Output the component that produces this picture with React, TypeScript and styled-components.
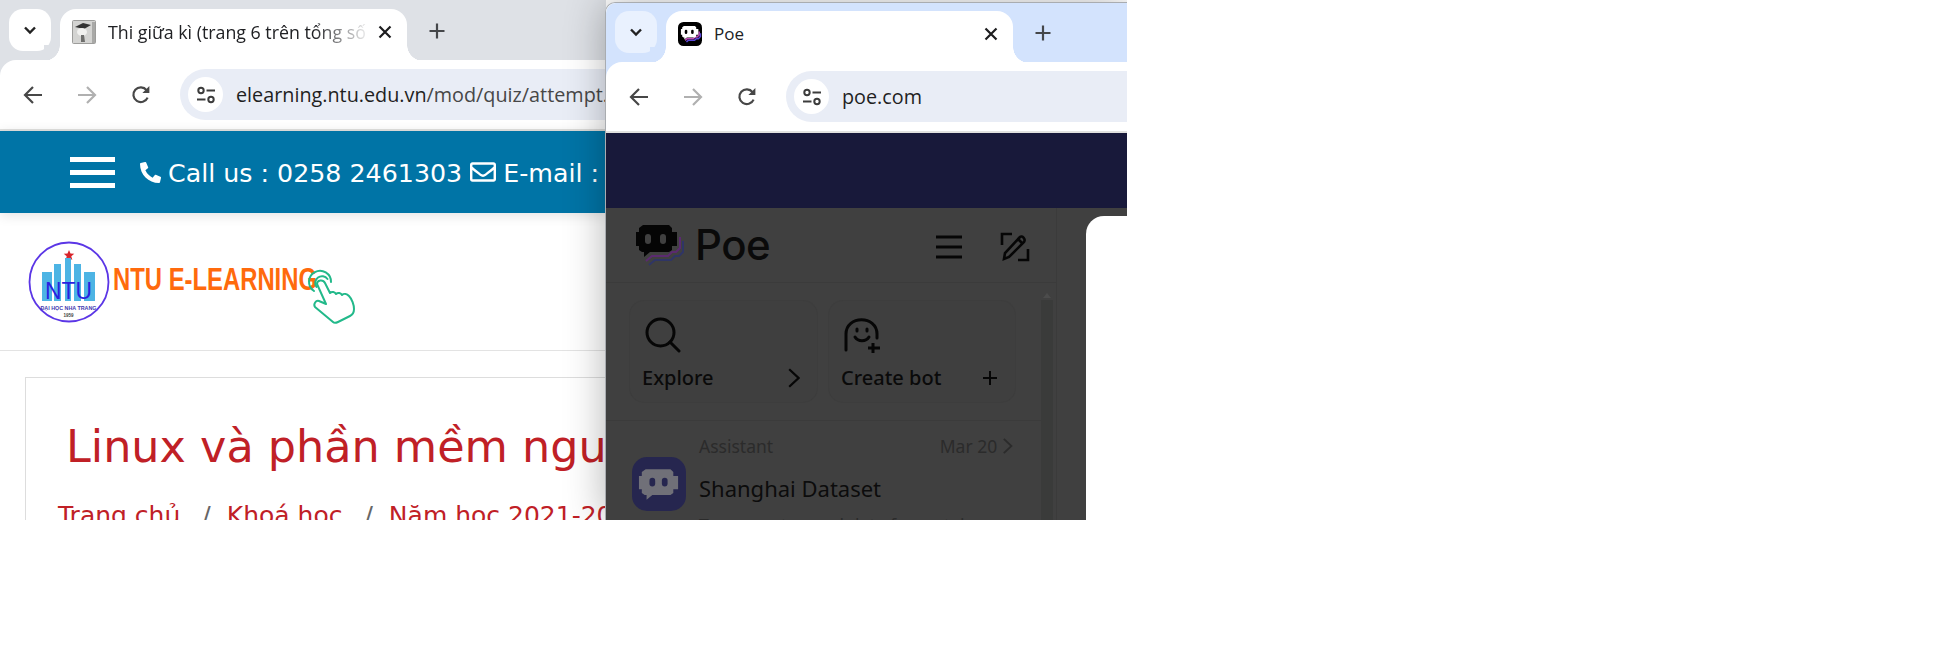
import React from 'react';
import styled, { createGlobalStyle } from 'styled-components';
import { FaPhoneAlt, FaRegEnvelope } from 'react-icons/fa';

const GlobalStyle = createGlobalStyle`
  html, body {
    margin: 0;
    padding: 0;
    background: #fff;
  }
  * {
    box-sizing: border-box;
  }
`;

const uiFont = `"Open Sans", "Noto Sans", sans-serif`;
const pageFont = `"DejaVu Sans", Verdana, sans-serif`;
const poeFont = `"Noto Sans", "Open Sans", sans-serif`;

const Desktop = styled.div`
  display: flex;
  width: 1127px;
  height: 520px;
  overflow: hidden;
`;

const LeftWindow = styled.div`
  width: 606px;
  flex: none;
  display: flex;
  flex-direction: column;
`;

const RightWindow = styled.div`
  flex: 1;
  margin: 2px 0 0 -1px;
  display: flex;
  flex-direction: column;
  border-top: 1px solid #a9acb0;
  border-left: 1px solid #a9acb0;
  border-radius: 10px 0 0 0;
  box-shadow: 0 0 40px rgba(0, 0, 0, 0.3);
  z-index: 2;
`;

const ChromeFrame = styled.div<{ $bg: string }>`
  flex: none;
  background: ${(p) => p.$bg};
  border-radius: inherit;
`;

const TabStrip = styled.div<{ $h: number; $pad: number }>`
  display: flex;
  align-items: flex-start;
  height: ${(p) => p.$h}px;
  padding: ${(p) => p.$pad}px 0 0 9px;
  overflow: hidden;
`;

const TabSearch = styled.div<{ $bg: string }>`
  width: 42px;
  height: 42px;
  border-radius: 14px;
  background: ${(p) => p.$bg};
  display: flex;
  align-items: center;
  justify-content: center;
  flex: none;
`;

const Tab = styled.div<{ $flare: string }>`
  position: relative;
  width: 347px;
  height: 52px;
  margin-left: 9px;
  padding: 0 14px 6px 12px;
  background: #fff;
  border-radius: 16px 16px 0 0;
  display: flex;
  align-items: center;
  flex: none;

  &::before,
  &::after {
    content: '';
    position: absolute;
    bottom: 0;
    width: 16px;
    height: 16px;
  }
  &::before {
    left: -16px;
    background: radial-gradient(circle at 0 0, ${(p) => p.$flare} 15.5px, #fff 16px);
  }
  &::after {
    right: -16px;
    background: radial-gradient(circle at 100% 0, ${(p) => p.$flare} 15.5px, #fff 16px);
  }
`;

const TabTitle = styled.span<{ $fade?: boolean }>`
  flex: 1;
  min-width: 0;
  margin: 0 6px 0 12px;
  font: ${(p) => (p.$fade ? 17.8 : 17)}px/24px ${uiFont};
  color: #202124;
  white-space: nowrap;
  overflow: hidden;
  ${(p) =>
    p.$fade &&
    `-webkit-mask-image: linear-gradient(to right, #000 78%, transparent 100%);
     mask-image: linear-gradient(to right, #000 78%, transparent 100%);`}
`;

const NewTab = styled.div`
  margin: 9px 0 0 17px;
  width: 26px;
  height: 26px;
  display: flex;
  align-items: center;
  justify-content: center;
  flex: none;
`;

const Toolbar = styled.div`
  height: 71px;
  display: flex;
  align-items: flex-start;
  padding: 9px 0 0 20px;
  background: #fff;
  border-radius: 16px 0 0 0;
  border-bottom: 2px solid #e1e1df;
  margin-top: -1px;
  position: relative;
`;

const NavButton = styled.div`
  width: 26px;
  height: 51px;
  margin-right: 28px;
  display: flex;
  align-items: center;
  justify-content: center;
  flex: none;
`;

const Omnibox = styled.div`
  flex: 1;
  height: 51px;
  margin-left: -2px;
  padding-left: 8px;
  display: flex;
  align-items: center;
  gap: 13px;
  background: #e9edf6;
  border-radius: 26px 0 0 26px;
  overflow: hidden;
`;

const SiteInfo = styled.div`
  width: 35px;
  height: 35px;
  border-radius: 50%;
  background: #fff;
  display: flex;
  align-items: center;
  justify-content: center;
  flex: none;
`;

const Url = styled.span`
  font: 19.8px/28px ${uiFont};
  color: #1f1f1f;
  white-space: nowrap;
`;

const UrlPath = styled.span`
  color: #474747;
`;

const BlueBar = styled.div`
  height: 82px;
  flex: none;
  background: #0074a6;
  padding-left: 70px;
  display: flex;
  align-items: center;
  color: #fff;
  white-space: nowrap;
  overflow: hidden;
  box-shadow: 0 2px 12px rgba(0, 0, 0, 0.12);
  position: relative;

  & > * {
    flex: none;
  }
`;

const Burger = styled.div`
  width: 45px;
  height: 31px;
  margin-right: 25px;
  display: flex;
  flex-direction: column;
  justify-content: space-between;
`;

const BurgerLine = styled.span`
  height: 5px;
  background: #fff;
`;

const ContactText = styled.span`
  font: 25.3px/32px ${pageFont};
  margin: 3px 8px 0 7px;
`;

const SiteHeader = styled.div`
  height: 138px;
  flex: none;
  padding: 27px 0 0 27px;
  border-bottom: 1px solid #e3e3e3;
  background: #fff;
`;

const Main = styled.div`
  flex: 1;
  padding: 26px 0 0 25px;
  background: #fff;
  overflow: hidden;
`;

const Card = styled.div`
  height: 300px;
  border: 1px solid #ddd;
  border-right: none;
  padding: 38px 0 0 32px;
  white-space: nowrap;
  overflow: hidden;
`;

const Title = styled.h1`
  margin: 0 0 0 8px;
  font: 400 44.5px/62px ${pageFont};
  color: #c02026;
`;

const Crumbs = styled.div`
  margin-top: 21px;
  font: 400 25px/34px ${pageFont};
  color: #c02026;
  display: flex;
  gap: 16px;
`;

const CrumbSep = styled.span`
  margin-left: 6px;
  color: #666;
`;

const PoeBanner = styled.div`
  height: 75px;
  flex: none;
  background: #18193a;
`;

const PoeBody = styled.div`
  flex: 1;
  display: flex;
  background: #404040;
  min-height: 0;
`;

const Sidebar = styled.div`
  width: 451px;
  flex: none;
  border-right: 1px solid #3b3b3b;
  display: flex;
  flex-direction: column;
  overflow: hidden;
`;

const SideHead = styled.div`
  height: 75px;
  flex: none;
  padding: 16px 26px 0 29px;
  display: flex;
  align-items: flex-start;
  border-bottom: 1px solid #3b3b3b;
`;

const Wordmark = styled.span`
  margin: -4px 0 0 10px;
  font: 500 42px/50px Inter, ${poeFont};
  letter-spacing: -0.5px;
  color: #0a0a0a;
  flex: 1;
`;

const HeadIcons = styled.div`
  display: flex;
  align-items: center;
  gap: 38px;
  margin-top: 8px;
`;

const SideScroll = styled.div`
  flex: 1;
  display: flex;
  min-height: 0;
`;

const SideContent = styled.div`
  flex: 1;
  min-width: 0;
  display: flex;
  flex-direction: column;
`;

const Actions = styled.div`
  display: grid;
  grid-template-columns: 187px 186px;
  gap: 12px;
  padding: 18px 0 18px 24px;
  border-bottom: 1px solid #3b3b3b;
`;

const ActionCard = styled.div`
  height: 101px;
  padding: 16px 17px 0 12px;
  background: #3f3f3f;
  border-radius: 14px;
  box-shadow: 0 0 0 1px #3d3d3d;
`;

const ActionIcon = styled.div`
  height: 39px;
  padding-left: 3px;
`;

const ActionRow = styled.div`
  margin-top: 8px;
  display: flex;
  align-items: center;
  justify-content: space-between;
  font: 500 20px/28px ${poeFont};
  color: #0a0a0a;
`;

const ChatRow = styled.div`
  display: flex;
  padding: 13px 0 0 26px;
  gap: 13px;
`;

const BotAvatar = styled.div`
  width: 54px;
  height: 54px;
  margin-top: 23px;
  border-radius: 15px;
  background: #26264f;
  display: flex;
  align-items: center;
  justify-content: center;
  flex: none;
`;

const ChatText = styled.div`
  flex: 1;
  min-width: 0;
  white-space: nowrap;
`;

const ChatMeta = styled.div`
  display: flex;
  align-items: center;
  justify-content: space-between;
  padding-right: 28px;
  font: 400 17.5px/24px ${poeFont};
  color: #2b2b2b;
`;

const ChatDate = styled.span`
  display: flex;
  align-items: center;
  gap: 5px;
`;

const ChatName = styled.div`
  margin-top: 15px;
  font: 400 22px/30px ${poeFont};
  color: #0c0c0c;
`;

const ChatSnippet = styled.div`
  margin-top: 10px;
  font: 400 17.5px/24px ${poeFont};
  color: #2b2b2b;
`;

const ScrollTrack = styled.div`
  width: 12px;
  margin: 10px 3px 0 0;
  flex: none;
  display: flex;
  flex-direction: column;
  align-items: center;
`;

const ScrollArrow = styled.div`
  width: 0;
  height: 0;
  border: 4px solid transparent;
  border-top: none;
  border-bottom: 5px solid #4c4c4c;
`;

const ScrollThumb = styled.div`
  width: 12px;
  flex: 1;
  margin-top: 2px;
  background: #3a3b3a;
`;

const Gutter = styled.div`
  width: 29px;
  flex: none;
`;

const ContentPanel = styled.div`
  flex: 1;
  margin-top: 8px;
  background: #fff;
  border-radius: 18px 0 0 0;
`;

type IconProps = { color?: string };

const Chevron = () => (
  <svg width="16" height="16" viewBox="0 0 16 16" fill="none">
    <path d="M3 5.5 8 10.5 13 5.5" stroke="#222" strokeWidth="2.4" />
  </svg>
);

const CloseIcon = () => (
  <svg width="16" height="16" viewBox="0 0 16 16" fill="none" style={{ flex: 'none' }}>
    <path d="M2.5 2.5 13.5 13.5M13.5 2.5 2.5 13.5" stroke="#1d1d1f" strokeWidth="2.2" />
  </svg>
);

const PlusIcon = () => (
  <svg width="18" height="18" viewBox="0 0 18 18" fill="none">
    <path d="M9 1.5V16.5M1.5 9H16.5" stroke="#45474a" strokeWidth="2.2" />
  </svg>
);

const ArrowLeft = ({ color = '#474747' }: IconProps) => (
  <svg width="20" height="20" viewBox="0 0 20 20" fill="none">
    <path d="M19 10H2.5M10 2 2 10l8 8" stroke={color} strokeWidth="2.2" />
  </svg>
);

const ArrowRight = ({ color = '#b0b0b0' }: IconProps) => (
  <svg width="20" height="20" viewBox="0 0 20 20" fill="none">
    <path d="M1 10H17.5M10 2l8 8-8 8" stroke={color} strokeWidth="2.2" />
  </svg>
);

const ReloadIcon = () => (
  <svg width="20" height="20" viewBox="0 0 20 20" fill="none">
    <path d="M16.6 12.6A7.4 7.4 0 1 1 15.6 5.1" stroke="#474747" strokeWidth="2.2" />
    <path d="M18.4 1v7h-7z" fill="#474747" />
  </svg>
);

const TuneIcon = () => (
  <svg width="20" height="20" viewBox="0 0 20 20" fill="none" stroke="#3c3c3c" strokeWidth="2">
    <circle cx="5" cy="5.5" r="2.7" />
    <path d="M10.5 5.5H19M1 14.5H9.5" />
    <circle cx="15" cy="14.5" r="2.7" />
  </svg>
);

const CapFavicon = () => (
  <svg width="24" height="24" viewBox="0 0 24 24" style={{ flex: 'none' }}>
    <rect x="0.5" y="0.5" width="23" height="23" rx="1" fill="#d4d4d2" stroke="#9d9d9b" />
    <path d="M3 7 11 3l8 2-7 4z" fill="#333" />
    <ellipse cx="10" cy="12" rx="5" ry="4" fill="#f1f1ef" />
    <path d="M9 15h3l1 7H9z" fill="#6e6e6c" />
    <path d="M20 2h3v21h-3z" fill="#a9a9a7" />
  </svg>
);

// robot speech bubble, shared by the tab favicon, sidebar logo and avatars
const BubblePath =
  'M8 1H34L37 4V8H42V22H37V26L34 28H15L9 33V28H7L4 26V22H1V8H4V4Z';

const PoeFavicon = () => (
  <svg width="24" height="24" viewBox="0 0 48 48" style={{ flex: 'none' }}>
    <rect width="48" height="48" rx="11" fill="#000" />
    <g transform="translate(5 7) scale(.85)">
      <path d="M11 35 15 31H30L34 27H39L44 22V14" stroke="#c04ab8" strokeWidth="3.5" fill="none" />
      <path d="M14 39 18 35H33L37 31H42L47 26V18" stroke="#5a48d8" strokeWidth="3.5" fill="none" />
      <path d={BubblePath} fill="#fff" />
      <rect x="10" y="10" width="6" height="10" rx="3" fill="#000" />
      <rect x="25" y="10" width="6" height="10" rx="3" fill="#000" />
    </g>
  </svg>
);

const PoeLogo = () => (
  <svg width="50" height="43" viewBox="0 0 50 43" style={{ flex: 'none' }}>
    <path d="M11 37 17 32H33L37 28H41L45 24V13" stroke="#5b2a70" strokeWidth="2" fill="none" />
    <path d="M14 41 20 36H36L40 32H44L48 28V17" stroke="#2f3566" strokeWidth="2" fill="none" />
    <path d={BubblePath} fill="#050505" />
    <rect x="10" y="10" width="6" height="10" rx="3" fill="#404040" />
    <rect x="25" y="10" width="6" height="10" rx="3" fill="#404040" />
  </svg>
);

const AvatarBot = () => (
  <svg width="42" height="33" viewBox="0 0 44 34">
    <path d={BubblePath} fill="#707078" />
    <rect x="12" y="10" width="6" height="9" rx="3" fill="#26264f" />
    <rect x="25" y="10" width="6" height="9" rx="3" fill="#26264f" />
  </svg>
);

const NtuLogo = () => (
  <svg width="340" height="90" viewBox="0 0 340 90">
    <circle cx="42" cy="42" r="39.5" fill="#fff" stroke="#5b36e6" strokeWidth="1.8" />
    <path d="m42 10 1.5 3.6 3.8.2-3 2.4 1 3.7-3.3-2.1-3.3 2.1 1-3.7-3-2.4 3.8-.2z" fill="#d8232a" />
    <g fill="#4db4e4">
      <rect x="15" y="32" width="10" height="29" />
      <rect x="27" y="24" width="7" height="37" />
      <rect x="38" y="18" width="6" height="43" />
      <rect x="47" y="24" width="7" height="37" />
      <rect x="57" y="32" width="11" height="29" />
    </g>
    <text x="41.5" y="59" textAnchor="middle" fontFamily="Liberation Sans, sans-serif" fontSize="23" fill="#2a1fe0" textLength="47" lengthAdjust="spacingAndGlyphs">NTU</text>
    <text x="41.5" y="70" textAnchor="middle" fontFamily="Liberation Sans, sans-serif" fontSize="6" fontWeight="700" fill="#3e3ab0" textLength="56" lengthAdjust="spacingAndGlyphs">ĐẠI HỌC NHA TRANG</text>
    <text x="41.5" y="77" textAnchor="middle" fontFamily="Liberation Sans, sans-serif" fontSize="4.5" fontWeight="700" fill="#444">1959</text>
    <text x="86" y="50" fontFamily="Liberation Sans, sans-serif" fontSize="32" fontWeight="700" fill="#ff6a0d" textLength="204" lengthAdjust="spacingAndGlyphs">NTU E-LEARNING</text>
    <g transform="translate(273 22)" fill="none" stroke="#22b98a" strokeWidth="2" strokeLinecap="round" strokeLinejoin="round">
      <path d="M14 29A11 11 0 1 1 31 20" />
      <path d="M16.5 25A6.5 6.5 0 1 1 27.5 17" />
      <path d="M17 22c0-4 6-5 8-1l5 10c2-2 5-1 6 1 2-2 5-1 6 1 2-2 5-1 7 1 3 3 5 9 5 13 0 4-2 6-4 7l-12 6c-2 1-4 1-5 0L15 45c-2-3 1-7 4-6l7 3z" />
    </g>
  </svg>
);

const MenuIcon = () => (
  <svg width="26" height="24" viewBox="0 0 26 24" fill="none">
    <path d="M0 2H26M0 12H26M0 22H26" stroke="#060606" strokeWidth="3" />
  </svg>
);

const ComposeIcon = () => (
  <svg width="30" height="30" viewBox="0 0 30 30" fill="none" stroke="#060606" strokeWidth="2.6">
    <path d="M12 2H2v11M18 28h10V17" />
    <path d="M4 27l1-6L20 5c2-2 6 2 4 5L9 25z" />
    <path d="M18 7l5 5" />
  </svg>
);

const SearchIcon = () => (
  <svg width="36" height="36" viewBox="0 0 36 36" fill="none" stroke="#060606" strokeWidth="3">
    <circle cx="15.5" cy="15.5" r="13.5" />
    <path d="M25 25 34 34" strokeLinecap="round" />
  </svg>
);

const BotPlusIcon = () => (
  <svg width="38" height="38" viewBox="0 0 38 38" fill="none" stroke="#060606" strokeWidth="3" strokeLinecap="round">
    <path d="M2 33V17C2 -2 33 -2 33 17V21" />
    <path d="M11 20c3 5 11 5 14 0" />
    <path d="M13 12v2M23 12v2" />
    <path d="M29 26V36M24 31H36" strokeLinecap="butt" />
  </svg>
);

const SmallChevron = ({ size = 22, color = '#060606' }: { size?: number; color?: string }) => (
  <svg width={size * 0.6} height={size} viewBox="0 0 12 20" fill="none">
    <path d="M2 2 10.5 10 2 18" stroke={color} strokeWidth="2" />
  </svg>
);

const SmallPlus = () => (
  <svg width="16" height="16" viewBox="0 0 16 16" fill="none">
    <path d="M8 1V15M1 8H15" stroke="#060606" strokeWidth="2" />
  </svg>
);

type ChromeProps = {
  strip: string;
  searchBg: string;
  stripHeight: number;
  stripPad: number;
  favicon: React.ReactNode;
  title: string;
  fade?: boolean;
  url: React.ReactNode;
};

const BrowserChrome = ({ strip, searchBg, stripHeight, stripPad, favicon, title, fade, url }: ChromeProps) => (
  <ChromeFrame $bg={strip}>
    <TabStrip $h={stripHeight} $pad={stripPad}>
      <TabSearch $bg={searchBg}>
        <Chevron />
      </TabSearch>
      <Tab $flare={strip}>
        {favicon}
        <TabTitle $fade={fade}>{title}</TabTitle>
        <CloseIcon />
      </Tab>
      <NewTab>
        <PlusIcon />
      </NewTab>
    </TabStrip>
    <Toolbar>
      <NavButton>
        <ArrowLeft />
      </NavButton>
      <NavButton>
        <ArrowRight />
      </NavButton>
      <NavButton>
        <ReloadIcon />
      </NavButton>
      <Omnibox>
        <SiteInfo>
          <TuneIcon />
        </SiteInfo>
        <Url>{url}</Url>
      </Omnibox>
    </Toolbar>
  </ChromeFrame>
);

export default function App() {
  return (
    <>
      <GlobalStyle />
      <Desktop>
        <LeftWindow>
          <BrowserChrome
            strip="#dee1e6"
            searchBg="#ffffff"
            stripHeight={61}
            stripPad={9}
            favicon={<CapFavicon />}
            title="Thi giữa kì (trang 6 trên tổng số 8)"
            fade
            url={
              <>
                elearning.ntu.edu.vn<UrlPath>/mod/quiz/attempt.php?attempt=1</UrlPath>
              </>
            }
          />
          <BlueBar>
            <Burger>
              <BurgerLine />
              <BurgerLine />
              <BurgerLine />
            </Burger>
            <FaPhoneAlt size={21} />
            <ContactText>Call us : 0258 2461303</ContactText>
            <FaRegEnvelope size={26} />
            <ContactText>E-mail : elearning@ntu.edu.vn</ContactText>
          </BlueBar>
          <SiteHeader>
            <NtuLogo />
          </SiteHeader>
          <Main>
            <Card>
              <Title>Linux và phần mềm nguồn mở</Title>
              <Crumbs>
                <span>Trang chủ</span>
                <CrumbSep>/</CrumbSep>
                <span>Khoá học</span>
                <CrumbSep>/</CrumbSep>
                <span>Năm học 2021-2022</span>
              </Crumbs>
            </Card>
          </Main>
        </LeftWindow>
        <RightWindow>
          <BrowserChrome
            strip="#d3e3fd"
            searchBg="#e9f1fe"
            stripHeight={60}
            stripPad={8}
            favicon={<PoeFavicon />}
            title="Poe"
            url="poe.com"
          />
          <PoeBanner />
          <PoeBody>
            <Sidebar>
              <SideHead>
                <PoeLogo />
                <Wordmark>Poe</Wordmark>
                <HeadIcons>
                  <MenuIcon />
                  <ComposeIcon />
                </HeadIcons>
              </SideHead>
              <SideScroll>
                <SideContent>
                  <Actions>
                    <ActionCard>
                      <ActionIcon>
                        <SearchIcon />
                      </ActionIcon>
                      <ActionRow>
                        Explore
                        <SmallChevron />
                      </ActionRow>
                    </ActionCard>
                    <ActionCard>
                      <ActionIcon>
                        <BotPlusIcon />
                      </ActionIcon>
                      <ActionRow>
                        Create bot
                        <SmallPlus />
                      </ActionRow>
                    </ActionCard>
                  </Actions>
                  <ChatRow>
                    <BotAvatar>
                      <AvatarBot />
                    </BotAvatar>
                    <ChatText>
                      <ChatMeta>
                        Assistant
                        <ChatDate>
                          Mar 20
                          <SmallChevron size={18} color="#2b2b2b" />
                        </ChatDate>
                      </ChatMeta>
                      <ChatName>Shanghai Dataset</ChatName>
                      <ChatSnippet>To generate good data for certain</ChatSnippet>
                    </ChatText>
                  </ChatRow>
                </SideContent>
                <ScrollTrack>
                  <ScrollArrow />
                  <ScrollThumb />
                </ScrollTrack>
              </SideScroll>
            </Sidebar>
            <Gutter />
            <ContentPanel />
          </PoeBody>
        </RightWindow>
      </Desktop>
    </>
  );
}
